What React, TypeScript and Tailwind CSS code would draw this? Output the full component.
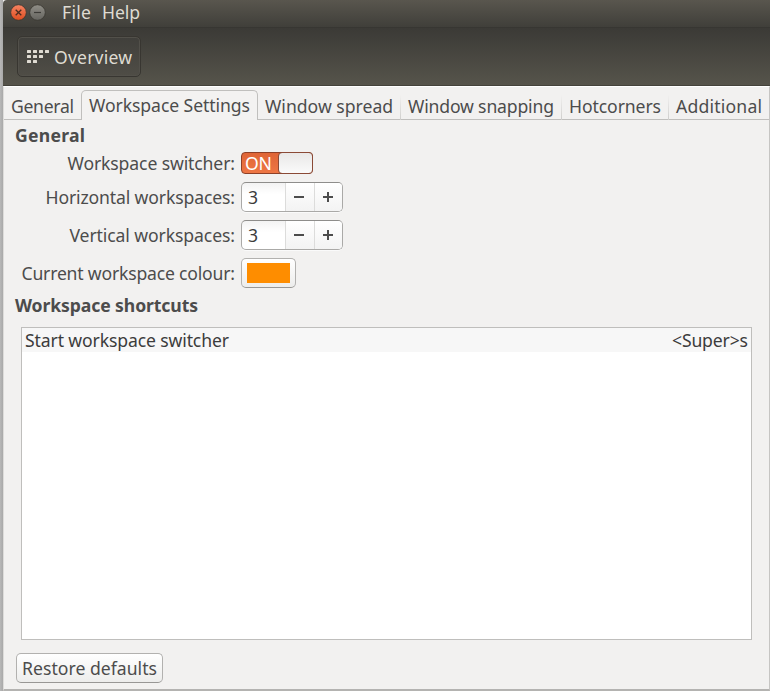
import { useLayoutEffect, useRef, useState } from "react";
import type { ReactNode } from "react";

/** Single line of text whose tracking is adjusted to fill its column. */
function Label({ text, className = "" }: { text: string; className?: string }) {
  const box = useRef<HTMLDivElement>(null);
  const ink = useRef<HTMLSpanElement>(null);
  const [tracking, setTracking] = useState(0);
  useLayoutEffect(() => {
    if (!box.current || !ink.current || text.length < 2) return;
    const room = box.current.getBoundingClientRect().width;
    const natural = ink.current.getBoundingClientRect().width - tracking * text.length;
    const next = (room - natural) / (text.length - 1);
    if (Math.abs(next - tracking) > 0.01) setTracking(next);
  }, [text, tracking]);
  return (
    <div ref={box} className={`h-6 shrink-0 whitespace-nowrap leading-6 ${className}`}>
      <span ref={ink} style={{ letterSpacing: tracking }}>{text}</span>
    </div>
  );
}

function Row({ label, width, children, className = "" }: { label: string; width: string; children: ReactNode; className?: string }) {
  return (
    <div className={`flex items-center ${className}`}>
      <div className="flex w-[232px] justify-end">
        <Label text={label} className={width} />
      </div>
      <div className="ml-[6px]">{children}</div>
    </div>
  );
}

function Spinner() {
  return (
    <div className="flex h-[30px] w-[102px] rounded-[5px] border border-[#aaa9a7] border-t-[#8e8d8b] bg-linear-to-b from-[#f3f3f3] to-white to-40% text-[#3c3c3c] shadow-[0_1px_0_#fafafa]">
      <div className="h-7 w-[43px] pl-[6px] pt-[2px] leading-6">3</div>
      <div className="flex w-[29px] items-center justify-center border-l border-[#dcdcdb] bg-linear-to-b from-white to-[#f3f3f3] pr-[2px]">
        <div className="h-[2px] w-[10px] bg-[#4c4c4c]" />
      </div>
      <div className="flex flex-1 items-center justify-center rounded-r-[4px] border-l border-[#dcdcdb] bg-linear-to-b from-white to-[#f3f3f3] pr-[2px]">
        <svg width="10" height="10" viewBox="0 0 10 10" fill="#4c4c4c" shapeRendering="crispEdges">
          <path d="M0 4h10v2H0zM4 0h2v10H4z" />
        </svg>
      </div>
    </div>
  );
}

const tabDivider = "mt-2 h-[25px] w-px bg-linear-to-b from-[#f2f1f0] to-[#cfcecc]";

export default function App() {
  return (
    <div className="flex h-[691px] w-[770px] overflow-hidden bg-[#f2f1f0] font-['Noto_Sans',sans-serif] text-[17.6px] text-[#4c4c4c]">
      <div className="w-[3px] shrink-0 bg-linear-to-r from-[#b8b8b8] to-[#a9a9a9]" />
      <div className="flex w-[767px] flex-col">
        <div className="flex h-[27px] items-start rounded-tl-[4px] bg-linear-to-b from-[#59564e] to-[#403f3a] text-[#dfdbd2]">
          <svg className="ml-[7px] mt-1" width="36" height="17" viewBox="0 0 36 17">
            <defs>
              <linearGradient id="close" x1="0" y1="0" x2="0" y2="1">
                <stop offset="0" stopColor="#f58463" />
                <stop offset="1" stopColor="#df4d20" />
              </linearGradient>
              <linearGradient id="min" x1="0" y1="0" x2="0" y2="1">
                <stop offset="0" stopColor="#908e87" />
                <stop offset="1" stopColor="#666560" />
              </linearGradient>
            </defs>
            <circle cx="8.5" cy="8.5" r="7.8" fill="url(#close)" stroke="#383630" strokeWidth="0.8" />
            <path d="M5.7 5.7l5.6 5.6M11.3 5.7l-5.6 5.6" stroke="#4a2c20" strokeWidth="1.3" />
            <circle cx="27.5" cy="8.5" r="7.8" fill="url(#min)" stroke="#383630" strokeWidth="0.8" />
            <path d="M24 8.5h7" stroke="#3c3b37" strokeWidth="1.2" />
          </svg>
          <Label text="File" className="ml-[16px] w-[29px]" />
          <Label text="Help" className="ml-[11px] w-[38px]" />
        </div>
        <div className="flex h-[59px] items-start border-y border-t-[#373632] border-b-[#44423b] bg-linear-to-b from-[#3b3a36] to-[#56544b] text-[#dfdbd2]">
          <div className="ml-[14px] mt-[8px] flex h-[41px] w-[124px] items-start rounded-[5px] border border-[#383631] bg-linear-to-b from-[#403f3b] to-[#4f4d46] pl-[9px] pt-[8px] shadow-[inset_0_0_0_1px_#52504a]">
            <svg className="mt-[5px]" width="22" height="14" viewBox="0 0 22 14" fill="#dfdbd2">
              {[[0, 0], [6, 0], [12, 0], [18, 0], [0, 5], [6, 5], [12, 5], [0, 10], [6, 10]].map(([x, y]) => (
                <rect key={`${x}-${y}`} x={x} y={y} width="4" height="3" rx="0.5" />
              ))}
            </svg>
            <Label text="Overview" className="ml-[5px] w-[78px]" />
          </div>
        </div>
        <div className="flex h-[605px] flex-col border-x border-b-2 border-l-[#dddcda] border-r-[#c6c5c3] border-b-[#b4b3b1] border-t border-t-white bg-[#f2f1f0]">
          <div className="flex h-[33px] items-start shadow-[inset_0_-1px_0_#c0bfbd]">
            <Label text="General" className="ml-[7px] mt-[7px] w-[63px]" />
            <div className="ml-[7px] mt-[3px] h-[30px] w-[177px] rounded-t-[5px] border border-b-0 border-[#c0bfbd] bg-[#f3f2f1] pl-[7px] pt-[2px]">
              <Label text="Workspace Settings" className="w-[161px]" />
            </div>
            <Label text="Window spread" className="ml-[7px] mt-[7px] w-[128px]" />
            <div className={`ml-[7px] ${tabDivider}`} />
            <Label text="Window snapping" className="ml-[7px] mt-[7px] w-[146px]" />
            <div className={`ml-[7px] ${tabDivider}`} />
            <Label text="Hotcorners" className="ml-[7px] mt-[7px] w-[92px]" />
            <div className={`ml-[7px] ${tabDivider}`} />
            <Label text="Additional" className="ml-[7px] mt-[7px] w-[86px]" />
          </div>
          <div className="flex flex-col pl-[11px] pt-[3px]">
            <Label text="General" className="w-[70px] font-bold" />
            <div className="-ml-[12px] flex flex-col">
              <Row label="Workspace switcher:" width="w-[167.5px]" className="mt-[4px] h-6">
                <div className="flex h-[22px] w-[72px] rounded-[4px] border border-[#8e4027] bg-linear-to-b from-[#df6536] to-[#ee7644]">
                  <div className="w-[36px] pl-[3px] text-white">
                    <Label text="ON" className="-mt-[2px] w-[27px]" />
                  </div>
                  <div className="-my-px -mr-px h-[22px] flex-1 rounded-[4px] border border-[#8b4a36] bg-linear-to-b from-[#e9e8e7] to-[#fafafa]" />
                </div>
              </Row>
              <Row label="Horizontal workspaces:" width="w-[189.5px]" className="mt-[7px] h-[30px]">
                <Spinner />
              </Row>
              <Row label="Vertical workspaces:" width="w-[165.5px]" className="mt-[8px] h-[30px]">
                <Spinner />
              </Row>
              <Row label="Current workspace colour:" width="w-[213.5px]" className="mt-[8px] h-[30px]">
                <div className="h-[30px] w-[55px] rounded-[5px] border border-[#b2b1af] border-b-[#989795] bg-linear-to-b from-white to-[#ededec] p-[4px] pl-[5px]">
                  <div className="h-[20px] w-[43px] bg-[#fe8d00]" />
                </div>
              </Row>
            </div>
            <Label text="Workspace shortcuts" className="mt-[5px] w-[183px] font-bold" />
            <div className="ml-[6px] mt-[10px] h-[313px] w-[731px] border border-[#bfbebc] bg-white text-[#3c3c3c]">
              <div className="flex h-6 items-start justify-between bg-[#f7f7f7] pl-[3px] pr-[3px]">
                <Label text="Start workspace switcher" className="w-[204px]" />
                <Label text="<Super>s" className="w-[76px]" />
              </div>
            </div>
            <div className="ml-px mt-[13px] h-[30px] w-[147px] rounded-[5px] border border-[#b2b1af] border-b-[#989795] bg-linear-to-b from-white to-[#ededec] pl-[5px] pt-[2px]">
              <Label text="Restore defaults" className="w-[135px]" />
            </div>
          </div>
        </div>
      </div>
    </div>
  );
}
